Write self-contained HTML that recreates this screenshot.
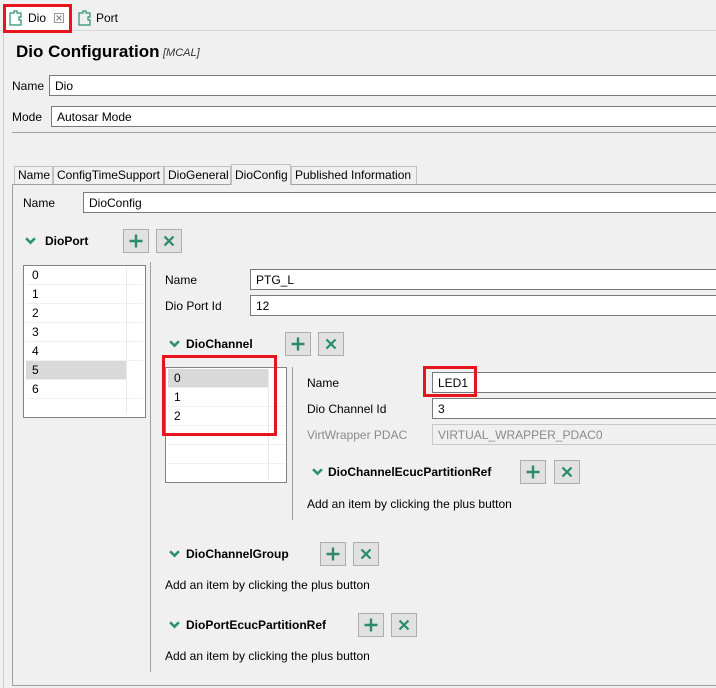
<!DOCTYPE html>
<html><head><meta charset="utf-8">
<style>
*{box-sizing:border-box;margin:0;padding:0}
body{width:716px;height:688px;background:#f0f0f0;font-family:"Liberation Sans",sans-serif;font-size:12px;color:#000;position:relative;overflow:hidden}
.a{position:absolute;white-space:nowrap}
.in{position:absolute;background:#fff;border:1px solid #7a7a7a;padding-left:5px;line-height:20px;height:21px}
.dis{background:#f0f0f0;border-color:#c8c8c8;color:#8a8a8a}
.btn{position:absolute;width:26px;height:24px;background:#e1e1e1;border:1px solid #adadad}
.btn svg{position:absolute;left:5px;top:4px}
.chev{position:absolute}
.hd{position:absolute;font-weight:bold;white-space:nowrap}
.red{position:absolute;border:3px solid #e8141c}
.tab{position:absolute;top:166px;height:18px;border:1px solid #c0c0c0;border-bottom:none;background:#f0f0f0;padding:0 3px;line-height:17px}
.list{position:absolute;background:#fff;border:1px solid #828282}
.row{position:absolute;left:2px;height:19px;line-height:19px;padding-left:6px;border-bottom:1px solid #f0f0f0}
</style></head><body>
<svg width="0" height="0" style="position:absolute"><defs>
<symbol id="pl" viewBox="0 0 14 14"><path d="M7 0.5v13M0.5 7h13" stroke="#2a8a6a" stroke-width="2.4" fill="none"/></symbol>
<symbol id="xx" viewBox="0 0 14 14"><path d="M2.5 2.5l9 9M11.5 2.5l-9 9" stroke="#2a8a6a" stroke-width="2.2" fill="none"/></symbol>
<symbol id="ch" viewBox="0 0 10 7"><path d="M1 1l4 4 4-4" stroke="#2a9070" stroke-width="2.4" fill="none"/></symbol>
</defs></svg>
<div class="a" style="left:0;top:30px;width:716px;height:1px;background:#d6d6d6"></div>
<div class="a" style="left:3px;top:30px;width:1px;height:658px;background:#d0d0d0"></div>
<div class="a" style="left:5px;top:6px;width:64px;height:25px;background:#fff"></div>
<svg class="a" style="left:9px;top:10px" width="14" height="16" viewBox="0 0 14 16"><path d="M1 3h4v-2h3v2h4v4h-2v3h2v5h-11z" fill="none" stroke="#2a9070" stroke-width="1.2"/></svg>
<div class="a" style="left:28px;top:11px">Dio</div>
<svg class="a" style="left:54px;top:13px" width="10" height="10" viewBox="0 0 10 10"><rect x="0.5" y="0.5" width="9" height="9" fill="none" stroke="#999"/><path d="M2.5 2.5l5 5M7.5 2.5l-5 5" stroke="#888" stroke-width="1.2"/></svg>
<svg class="a" style="left:78px;top:10px" width="14" height="16" viewBox="0 0 14 16"><path d="M1 3h4v-2h3v2h4v4h-2v3h2v5h-11z" fill="none" stroke="#2a9070" stroke-width="1.2"/></svg>
<div class="a" style="left:96px;top:11px">Port</div>
<div class="red" style="left:3px;top:4px;width:69px;height:29px"></div>

<div class="a" style="left:16px;top:42px;font-size:17px;font-weight:bold">Dio Configuration</div>
<div class="a" style="left:163px;top:47px;font-size:11px;font-style:italic;color:#333">[MCAL]</div>
<div class="a" style="left:12px;top:79px">Name</div>
<div class="in" style="left:49px;top:75px;width:680px">Dio</div>
<div class="a" style="left:12px;top:110px">Mode</div>
<div class="in" style="left:51px;top:106px;width:680px">Autosar Mode</div>
<div class="a" style="left:12px;top:132px;width:704px;height:1px;background:#a0a0a0"></div>

<div class="tab" style="left:14px;width:39px">Name</div>
<div class="tab" style="left:53px;width:111px">ConfigTimeSupport</div>
<div class="tab" style="left:164px;width:67px">DioGeneral</div>
<div class="tab" style="left:231px;width:60px;top:164px;height:21px;line-height:21px;z-index:2">DioConfig</div>
<div class="tab" style="left:291px;width:126px">Published Information</div>
<div class="a" style="left:12px;top:184px;width:710px;height:502px;border:1px solid #a0a0a0"></div>

<div class="a" style="left:23px;top:196px">Name</div>
<div class="in" style="left:83px;top:192px;width:640px">DioConfig</div>

<svg class="chev" style="left:25px;top:237px" width="11" height="8"><use href="#ch"/></svg>
<div class="hd" style="left:45px;top:234px">DioPort</div>
<div class="btn" style="left:123px;top:229px"><svg width="14" height="14"><use href="#pl"/></svg></div>
<div class="btn" style="left:156px;top:229px"><svg width="14" height="14"><use href="#xx"/></svg></div>

<div class="list" style="left:23px;top:265px;width:123px;height:153px">
<div class="a" style="left:102px;top:2px;width:1px;height:145px;background:#e8e8e8"></div>
<div class="row" style="top:0;width:117px">0</div>
<div class="row" style="top:19px;width:117px">1</div>
<div class="row" style="top:38px;width:117px">2</div>
<div class="row" style="top:57px;width:117px">3</div>
<div class="row" style="top:76px;width:117px">4</div>
<div class="row" style="top:95px;width:100px;background:#d9d9d9">5</div>
<div class="row" style="top:114px;width:117px">6</div>
<div class="row" style="top:133px;width:117px;border:none"></div>
</div>
<div class="a" style="left:150px;top:262px;width:1px;height:410px;background:#a0a0a0"></div>

<div class="a" style="left:165px;top:273px">Name</div>
<div class="in" style="left:250px;top:269px;width:480px">PTG_L</div>
<div class="a" style="left:165px;top:299px">Dio Port Id</div>
<div class="in" style="left:250px;top:295px;width:480px">12</div>

<svg class="chev" style="left:169px;top:340px" width="11" height="8"><use href="#ch"/></svg>
<div class="hd" style="left:186px;top:337px">DioChannel</div>
<div class="btn" style="left:285px;top:332px"><svg width="14" height="14"><use href="#pl"/></svg></div>
<div class="btn" style="left:318px;top:332px"><svg width="14" height="14"><use href="#xx"/></svg></div>

<div class="list" style="left:165px;top:367px;width:122px;height:116px">
<div class="a" style="left:102px;top:2px;width:1px;height:110px;background:#e8e8e8"></div>
<div class="row" style="top:1px;width:100px;background:#d9d9d9">0</div>
<div class="row" style="top:20px;width:117px">1</div>
<div class="row" style="top:39px;width:117px">2</div>
<div class="row" style="top:58px;width:117px"></div>
<div class="row" style="top:77px;width:117px"></div>
</div>
<div class="red" style="left:162px;top:355px;width:115px;height:81px"></div>
<div class="a" style="left:292px;top:367px;width:1px;height:153px;background:#a0a0a0"></div>

<div class="a" style="left:307px;top:376px">Name</div>
<div class="in" style="left:432px;top:372px;width:300px">LED1</div>
<div class="red" style="left:423px;top:366px;width:54px;height:31px"></div>
<div class="a" style="left:307px;top:402px">Dio Channel Id</div>
<div class="in" style="left:432px;top:398px;width:300px">3</div>
<div class="a" style="left:307px;top:428px;color:#8a8a8a">VirtWrapper PDAC</div>
<div class="in dis" style="left:432px;top:424px;width:300px">VIRTUAL_WRAPPER_PDAC0</div>

<svg class="chev" style="left:312px;top:468px" width="11" height="8"><use href="#ch"/></svg>
<div class="hd" style="left:328px;top:465px">DioChannelEcucPartitionRef</div>
<div class="btn" style="left:520px;top:460px"><svg width="14" height="14"><use href="#pl"/></svg></div>
<div class="btn" style="left:554px;top:460px"><svg width="14" height="14"><use href="#xx"/></svg></div>
<div class="a" style="left:307px;top:497px">Add an item by clicking the plus button</div>

<svg class="chev" style="left:169px;top:550px" width="11" height="8"><use href="#ch"/></svg>
<div class="hd" style="left:186px;top:547px">DioChannelGroup</div>
<div class="btn" style="left:320px;top:542px"><svg width="14" height="14"><use href="#pl"/></svg></div>
<div class="btn" style="left:353px;top:542px"><svg width="14" height="14"><use href="#xx"/></svg></div>
<div class="a" style="left:165px;top:578px">Add an item by clicking the plus button</div>

<svg class="chev" style="left:169px;top:621px" width="11" height="8"><use href="#ch"/></svg>
<div class="hd" style="left:186px;top:618px">DioPortEcucPartitionRef</div>
<div class="btn" style="left:358px;top:613px"><svg width="14" height="14"><use href="#pl"/></svg></div>
<div class="btn" style="left:391px;top:613px"><svg width="14" height="14"><use href="#xx"/></svg></div>
<div class="a" style="left:165px;top:649px">Add an item by clicking the plus button</div>
</body></html>
